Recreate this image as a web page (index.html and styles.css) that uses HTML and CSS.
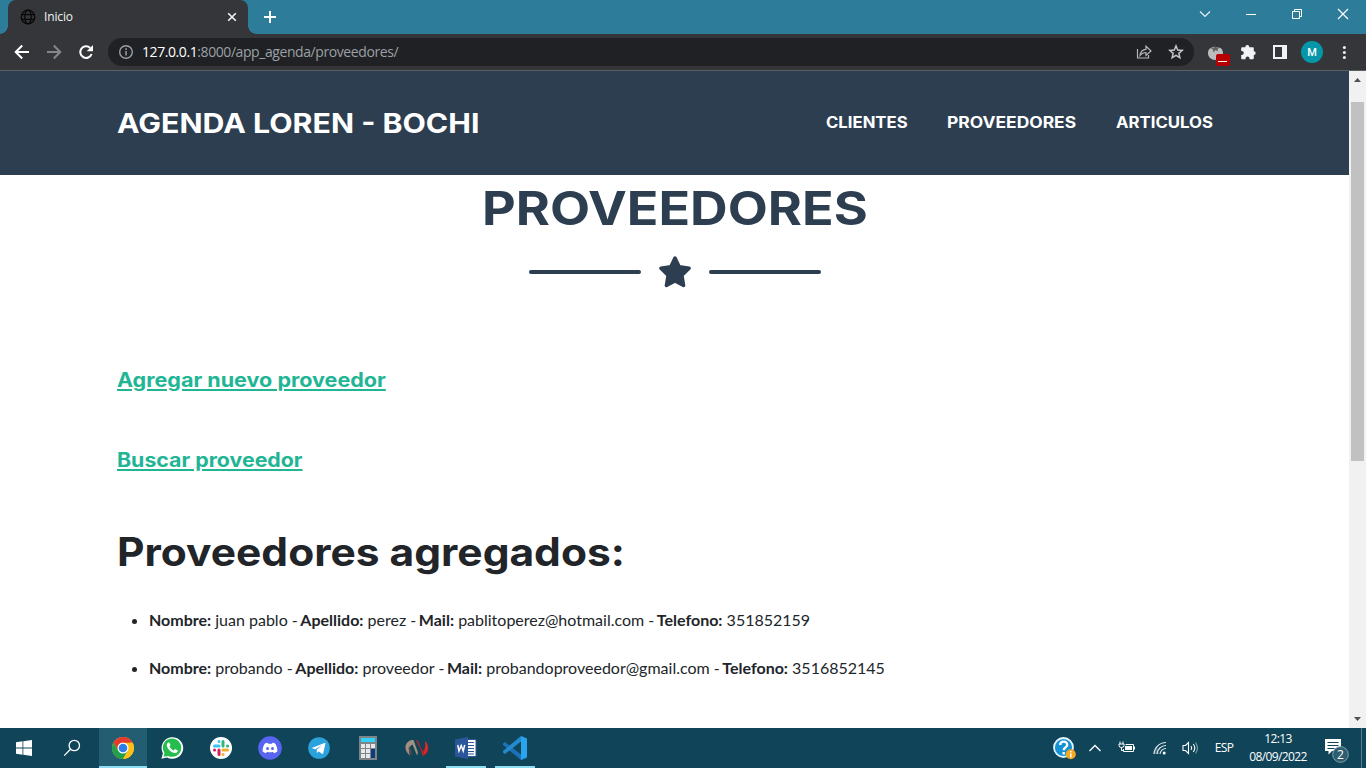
FILE: index.html
```html
<!DOCTYPE html>
<html lang="es">
<head>
<meta charset="utf-8">
<title>Inicio</title>
<link rel="stylesheet" href="styles.css">
</head>
<body>
<div class="screen">
  <div class="tabstrip">
    <div class="tab">
      <svg class="globe" width="16" height="16" viewBox="0 0 16 16" fill="none" stroke="#080809" stroke-width="1.3"><circle cx="8" cy="8" r="6.8"/><ellipse cx="8" cy="8" rx="3.2" ry="6.8"/><path d="M1.5 5.7h13M1.5 10.3h13"/></svg>
      <span class="tab-title">Inicio</span>
      <svg width="10" height="10" viewBox="0 0 10 10" stroke="#f1f3f4" stroke-width="1.6"><path d="M1.2 1.2l7.6 7.6M8.8 1.2L1.2 8.8"/></svg>
    </div>
    <svg class="newtab" width="12" height="12" viewBox="0 0 12 12" stroke="#fff" stroke-width="2"><path d="M6 0v12M0 6h12"/></svg>
    <div class="wincontrols">
      <svg width="46" height="28" fill="none" stroke="#e6f1f5" stroke-width="1.2"><path d="M18 11.5l5 5 5-5"/></svg>
      <svg width="46" height="28" fill="none" stroke="#fff"><path d="M18 14.5h10"/></svg>
      <svg width="46" height="28" fill="none" stroke="#fff"><path d="M18.500 11.500h7v7h-7zM20.500 11.500v-2h7v7h-2"/></svg>
      <svg width="46" height="28" fill="none" stroke="#fff" stroke-width="1.2"><path d="M18 9l10 10M28 9L18 19"/></svg>
    </div>
  </div>

  <div class="toolbar">
    <svg class="tool" width="32" height="32" viewBox="0 0 32 32" fill="none" stroke="#fff" stroke-width="2"><path d="M23 16H10M16.200 9.500L9.700 16l6.500 6.500"/></svg>
    <svg class="tool" width="32" height="32" viewBox="0 0 32 32" fill="none" stroke="#85868a" stroke-width="2"><path d="M9 16h13M15.800 9.500l6.500 6.500-6.500 6.500"/></svg>
    <svg class="tool" width="32" height="32" viewBox="0 0 32 32"><path d="M20.200 12A5.800 5.800 0 1 0 21.600 18" fill="none" stroke="#fff" stroke-width="2"/><path d="M23 9v6.300h-6.300z" fill="#fff"/></svg>
    <div class="omnibox">
      <svg width="16" height="16" viewBox="0 0 16 16"><circle cx="8" cy="8" r="6.300" fill="none" stroke="#9aa0a6" stroke-width="1.400"/><path d="M7.300 7h1.500v4.500H7.300zM7.300 4.300h1.500v1.600H7.300z" fill="#9aa0a6"/></svg>
      <span class="url"><b>127.0.0.1</b>:8000/app_agenda/proveedores/</span>
      <svg class="share" width="16" height="16" viewBox="0 0 16 16" fill="none" stroke="#b3b5b8" stroke-width="1.200"><path d="M1.500 5v9h11v-3"/><path d="M4 11.500C4.500 7.500 7 5.500 10 5.300V2.200L15 7l-5 4.500V8.500c-2.500 0-4.300.8-6 3z"/></svg>
      <svg width="16" height="16" viewBox="0 0 16 16" fill="none" stroke="#c3c5c8" stroke-width="1.500"><path d="M8 1.900l1.750 4.100 4.450.4-3.350 2.950 1 4.350L8 11.400l-3.850 2.300 1-4.350L1.800 6.400 6.250 6z"/></svg>
    </div>
    <div class="extensions">
      <svg width="32" height="32" viewBox="0 0 32 32"><path d="M15.500 11.500c4.500-1 7.500 1.500 7.500 5.500s-3 7-7.500 7S8 21 8 17s3-6.500 7.500-5.500z" fill="#bcbcbc"/><path d="M10.500 12l3.500.3.500-3.800 1.200 3.300 4.300-1-2.500 2.700.5 2-2.500-1.500-2 2.500-.5-2.800z" fill="#5d5e60"/><rect x="16" y="18" width="14" height="12" rx="2" fill="#b80000"/><path d="M18 25.500h9" stroke="#fff"/></svg>
      <svg width="32" height="32" viewBox="0 0 32 32"><path d="M13.300 11.300V11a2 2 0 0 1 4 0v.3h3.200c.8 0 1.300.5 1.300 1.300v2.600a1.900 1.900 0 0 1 0 3.800v2.900c0 .8-.5 1.300-1.300 1.300h-3v-.6a2 2 0 0 0-4 0v.6h-3c-.8 0-1.300-.5-1.300-1.300v-2.800h.6a2 2 0 0 0 0-4h-.6v-2.500c0-.8.5-1.300 1.300-1.300z" fill="#f1f3f4"/></svg>
      <svg width="32" height="32" viewBox="0 0 32 32"><path fill-rule="evenodd" d="M9 9h14v14H9zM11 11h7v10h-7z" fill="#f1f3f4"/></svg>
      <span class="avatar">M</span>
      <svg width="32" height="32" viewBox="0 0 32 32" fill="#f1f3f4"><circle cx="16.400" cy="11.500" r="1.500"/><circle cx="16.400" cy="16.500" r="1.500"/><circle cx="16.400" cy="21.500" r="1.500"/></svg>
    </div>
  </div>

  <div class="viewport">
    <div class="page">
      <nav class="nav">
        <a class="brand"><span>AGENDA LOREN - BOCHI</span></a>
        <a class="link clientes"><span>CLIENTES</span></a>
        <a class="link proveedores"><span>PROVEEDORES</span></a>
        <a class="link articulos"><span>ARTICULOS</span></a>
      </nav>
      <main class="content">
        <h2 class="title"><span>PROVEEDORES</span></h2>
        <div class="divider">
          <i class="bar"></i>
          <svg width="34" height="34" viewBox="0 0 34 34"><path d="M17 3l4.200 8.800 9.900 1.400-7.200 7 1.700 10.300L17 26l-8.600 4.500 1.700-10.300-7.200-7 9.900-1.400z" fill="#2c3e50" stroke="#2c3e50" stroke-width="3.500" stroke-linejoin="round"/></svg>
          <i class="bar"></i>
        </div>
        <a class="action add"><span>Agregar nuevo proveedor</span></a>
        <a class="action search"><span>Buscar proveedor</span></a>
        <h1 class="subtitle"><span>Proveedores agregados:</span></h1>
        <ul class="list">
          <li><b>Nombre:</b> juan pablo - <b>Apellido:</b> perez - <b>Mail:</b> pablitoperez@hotmail.com - <b>Telefono:</b> 351852159</li>
          <li><b>Nombre:</b> probando - <b>Apellido:</b> proveedor - <b>Mail:</b> probandoproveedor@gmail.com - <b>Telefono:</b> 3516852145</li>
        </ul>
      </main>
    </div>
    <div class="scrollbar">
      <svg width="17" height="17" fill="#505050"><path d="M5 11h7L8.500 7z"/></svg>
      <div class="thumb"></div>
      <svg class="down" width="17" height="17" fill="#505050"><path d="M5 6h7l-3.500 4z"/></svg>
    </div>
  </div>

  <div class="taskbar">
    <div class="cell"><svg width="16" height="16" viewBox="0 0 16 16" fill="#fff"><path d="M0 2.200l6.500-.9v6.300H0zM7.300 1.200L16 0v7.600H7.300zM0 8.400h6.500v6.300L0 13.800zM7.300 8.400H16V16l-8.700-1.200z"/></svg></div>
    <div class="cell"><svg width="18" height="18" viewBox="0 0 18 18" fill="none" stroke="#fff" stroke-width="1.300"><circle cx="11.300" cy="6.500" r="5.200"/><path d="M7.500 10.300L1.200 16.600"/></svg></div>
    <div class="apps">
      <div class="cell active"><svg width="24" height="24" viewBox="0 0 24 24"><circle cx="12" cy="12" r="11" fill="#fbc116"/><path d="M2.470 6.500A11 11 0 0 1 21.530 6.500L12 7 7.240 14.750z" fill="#e33b2e"/><path d="M2.470 6.500A11 11 0 0 0 12 23l4.760-8.250H7.240z" fill="#229f4d"/><path d="M12 7h9.800A11 11 0 0 1 12 23l4.760-8.250z" fill="#fbc116"/><circle cx="12" cy="12" r="5.500" fill="#fff"/><circle cx="12" cy="12" r="4.300" fill="#2b7de9"/></svg></div>
      <div class="cell"><svg width="24" height="24" viewBox="0 0 24 24"><path d="M1.400 22.800l1.500-5.600A10.800 10.800 0 1 1 7 21.400z" fill="#fff"/><path d="M3.500 20.700l1-3.800A9.200 9.200 0 1 1 8 19.900z" fill="#25bd4b"/><path d="M8.300 6.500c-.9.400-1.600 1.300-1.500 2.700.2 3.500 5 8 8.600 7.700 1.400-.1 2.400-1 2.400-2.500l-2.800-1.500-1.300 1.500c-2-.8-3.300-2-4.200-3.900l1-1.300-1.100-2.700z" fill="#fff"/></svg></div>
      <div class="cell"><svg width="24" height="24" viewBox="0 0 24 24"><circle cx="12" cy="12" r="11" fill="#fff"/><g stroke-width="3" stroke-linecap="round"><path d="M10 5.500v.1M5.500 10H10" stroke="#36c5f0"/><path d="M14 5.500V10M18.500 10h.1" stroke="#2eb67d"/><path d="M14 14h4.500M14 18.500v.1" stroke="#ecb22e"/><path d="M10 14v4.500M5.500 14h.1" stroke="#e01e5a"/></g></svg></div>
      <div class="cell"><svg width="24" height="24" viewBox="0 0 24 24"><circle cx="12" cy="12" r="11.800" fill="#5865f2"/><path d="M9.500 6.800c-1.200.1-2.200.5-3 1.100C5 10.500 4.500 13 4.700 15.600c1 .8 2 1.300 3.300 1.600l.9-1.400c2 .7 4.200.7 6.200 0l.9 1.400c1.300-.3 2.300-.8 3.300-1.600.2-2.600-.3-5.100-1.800-7.700-.8-.6-1.800-1-3-1.100l-.5 1c-1.300-.2-2.700-.2-4 0z" fill="#fff"/><circle cx="9.500" cy="12.600" r="1.500" fill="#5865f2"/><circle cx="14.500" cy="12.600" r="1.500" fill="#5865f2"/></svg></div>
      <div class="cell"><svg width="24" height="24" viewBox="0 0 24 24"><circle cx="12" cy="12" r="10.800" fill="#2ca2dd"/><path d="M4.800 12l12.700-5c.6-.2 1 .1.900.8l-2.200 9.500c-.2.700-.6.800-1.200.5L11.700 15.400l-1.800 1.700-.3-3.300 5.300-4.600-6.600 4.100-3.300-1c-.6-.1-.5-.2-.2-.3z" fill="#fff"/></svg></div>
      <div class="cell"><svg width="24" height="24" viewBox="0 0 24 24"><path d="M3 0h18v24H3z" fill="#7d858b"/><path d="M5 2h14v4H5z" fill="#32d1f5"/><path d="M5 8h4v4H5zM10 8h4v4h-4zM15 8h4v4h-4zM5 13h4v4H5zM10 13h4v4h-4zM5 18h4v4H5zM10 18h4v4h-4z" fill="#e8e8e8"/><path d="M15 13h4v9h-4z" fill="#0e3b7b"/></svg></div>
      <div class="cell"><svg width="26" height="24" viewBox="0 0 26 24"><path d="M7.500 4C0 6-.5 15 6 19.500 4 15 5 10 8.500 8.500L13 19.500l1-3L9.500 4z" fill="#a18f82"/><path d="M5 10c-1 3 0 7 3 10l-1-6z" fill="#5d4a42"/><path d="M11.500 4l4.500 8 2.500 8c7-2 8-11 2.500-15 1 5 0 8-2.500 10L14 5z" fill="#b02329"/><path d="M21 5c4 4 3 11-2 14 3-5 3-9 2-14z" fill="#d63235"/></svg></div>
      <div class="cell open"><svg width="24" height="24" viewBox="0 0 24 24"><path d="M12 3.500h10v17H12z" fill="#fff" stroke="#315596" stroke-width="1"/><path d="M14 6.500h6M14 9.500h6M14 12.500h6M14 15.500h6M14 18h6" stroke="#315596" stroke-width="1.200"/><path d="M1 3.500L14 1v22L1 20.500z" fill="#2b579a"/><path d="M3.700 9l1.300 6 2.200-5.500 2 5.500L10.700 9" fill="none" stroke="#fff" stroke-width="1.500"/></svg></div>
      <div class="cell open"><svg width="24" height="24" viewBox="0 0 24 24"><path d="M0 7.500L2 6l16 12.500V24L0 9z" fill="#1b72b8"/><path d="M0 16.500L2 18 18 5.500V0L0 15z" fill="#2489ce"/><path d="M18 0l6 2.500v19L18 24z" fill="#2aa4ee"/></svg></div>
    </div>
    <div class="tray">
      <div class="help"><svg width="24" height="24" viewBox="0 0 24 24"><circle cx="11.500" cy="11.500" r="9.500" fill="#1591d4" stroke="#e3f5fb" stroke-width="1.800"/><path d="M8.200 9c0-4.500 7-4.300 7-.3 0 2.700-3.500 2.600-3.500 5.600M11.700 16v2.400" fill="none" stroke="#fff" stroke-width="2.400"/><circle cx="18.800" cy="18.300" r="5" fill="#f3aa20"/><path d="M18.800 15v1.500M18.800 17.500v4" stroke="#fff" stroke-width="1.500"/></svg></div>
      <div class="chev"><svg width="14" height="10" fill="none" stroke="#fff" stroke-width="1.300"><path d="M1.500 8L7 2.500 12.500 8"/></svg></div>
      <div class="batt"><svg width="18" height="16" viewBox="0 0 18 16" fill="none" stroke="#fff"><path d="M7.500 4.500h8v7h-10V9M16.500 6.500v3"/><path d="M1 4h5v1.500a2.500 2 0 0 1-5 0zM2 1.500V4M5 1.500V4M3.500 7.500v3h2"/><path d="M7 6h7v4H7z" fill="#fff" stroke="none"/></svg></div>
      <div class="wifi"><svg width="14" height="14" viewBox="0 0 14 14" fill="none" stroke="#e1e9ed" stroke-width="1.200"><path d="M1 13A12 12 0 0 1 13 1.500M4 13a9 9 0 0 1 9-8.500M7 13a6 6 0 0 1 6-5.500"/><path d="M1 13A12 12 0 0 1 4 5l2 8z" fill="#e1e9ed" opacity=".25" stroke="none"/><circle cx="11.200" cy="12" r="1.500" fill="#fff" stroke="none"/></svg></div>
      <div class="vol"><svg width="18" height="14" viewBox="0 0 18 14" fill="none" stroke="#fff" stroke-width="1.100"><path d="M2 4.500h2.500l3-3v11l-3-3H2z"/><path d="M10 5q1.500 2 0 4M12.300 3q3 4 0 8"/><path d="M14.500 1.500q4 5.500 0 11" stroke="#7d9daa"/></svg></div>
      <div class="lang">ESP</div>
      <div class="clock"><span>12:13</span><span>08/09/2022</span></div>
      <div class="notif"><svg width="26" height="26" viewBox="0 0 26 26"><path d="M2 2h16v12H9l-3.500 3.500V14H2z" fill="#fff"/><path d="M4.500 5.500h11M4.500 8.500h11M4.500 11.500h7" stroke="#104458"/><circle cx="17.500" cy="17.500" r="7.800" fill="#2f5d70" stroke="#83a1ad"/><text x="17.500" y="22" text-anchor="middle" class="count">2</text></svg></div>
      <i class="edge"></i>
    </div>
  </div>
</div>
</body>
</html>
```

FILE: styles.css
```css
* { box-sizing: border-box; }
body { margin: 0; overflow: hidden; }
svg { display: block; flex: none; }
.screen { width: 1366px; height: 768px; display: flex; flex-direction: column; overflow: hidden; background: #fff; }

.tabstrip { height: 34px; flex: none; display: flex; background: #2d7c9a; padding-left: 8px; }
.tab { width: 240px; height: 34px; background: #35363a; border-radius: 8px 8px 0 0; display: flex; align-items: center; padding: 0 11px 0 12px; position: relative; }
.tab::before, .tab::after { content: ""; position: absolute; bottom: 0; width: 8px; height: 8px; }
.tab::before { left: -8px; background: radial-gradient(circle at 0 0, transparent 7.5px, #35363a 8px); }
.tab::after { right: -8px; background: radial-gradient(circle at 100% 0, transparent 7.5px, #35363a 8px); }
.tab-title { flex: 1; margin: -2px 0 0 8px; font: 12px "Open Sans", "Noto Sans", sans-serif; letter-spacing: -0.15px; color: #f1f3f4; }
.newtab { margin: 11px 0 0 16px; }
.wincontrols { display: flex; margin-left: auto; }

.toolbar { height: 37px; flex: none; display: flex; align-items: center; background: #35363a; border-bottom: 1px solid #5b6065; padding-left: 6px; }
.tool { margin: 0; }
.omnibox { width: 1086px; height: 28px; margin-left: 6px; border-radius: 14px; background: #202124; display: flex; align-items: center; padding: 0 10px; gap: 16px; }
.url { flex: 1; margin: -1px 0 0 -8px; font: 14px "Open Sans", "Noto Sans", sans-serif; letter-spacing: -0.42px; color: #9aa0a6; white-space: nowrap; }
.url b { font-weight: 400; color: #fff; }
.extensions { display: flex; align-items: center; margin-left: 6px; }
.avatar { width: 22px; height: 22px; margin: 0 5px; border-radius: 50%; background: #0497a7; color: #fff; font: 500 11px/23px Roboto, sans-serif; text-align: center; }

.viewport { height: 657px; flex: none; display: flex; }
.page { width: 1349px; background: #fff; }
.nav { height: 104px; background: #2c3e50; display: flex; align-items: center; padding: 0 136px 0 117px; color: #fff; font-family: Inter, sans-serif; font-weight: 700; gap: 40px; white-space: nowrap; }
.nav span, .title span, .action span, .subtitle span { display: inline-block; transform-origin: 0 50%; white-space: nowrap; }
.brand { width: 362px; margin-right: auto; font-size: 27px; }
.brand span { transform: scaleX(1.122); }
.link { font-size: 15.4px; line-height: 20px; }
.clientes { width: 81px; }
.clientes span { transform: scaleX(1.085); }
.proveedores { width: 129px; }
.proveedores span { transform: scaleX(1.132); }
.articulos { width: 97px; }
.articulos span { transform: scaleX(1.088); }

.content { padding: 4px 117px 0; display: flex; flex-direction: column; align-items: flex-start; }
.title { width: 384px; margin: 0 0 0 365px; font: 700 46px/58px Inter, sans-serif; color: #2c3e50; }
.title span { transform: scaleX(1.132); }
.divider { display: flex; align-items: center; gap: 17px; margin: 18px 0 0 412px; }
.bar { width: 112px; height: 4px; border-radius: 4px; background: #2c3e50; }
.action { font: 700 19.4px/24px Inter, sans-serif; color: #1fb595; }
.action span { text-decoration: underline; text-decoration-thickness: 2px; text-underline-offset: 2px; }
.add { margin-top: 79px; }
.add span { transform: scaleX(1.111); }
.search { margin-top: 56px; }
.search span { transform: scaleX(1.1); }
.subtitle { margin: 56px 0 0; font: 700 39px/48px Inter, sans-serif; color: #212529; }
.subtitle span { transform: scaleX(1.089); }
.list { margin: 32px 0 0; padding-left: 32px; font: 16px/24px Lato, sans-serif; color: #212529; }
.list li { margin-bottom: 24px; white-space: nowrap; }
.list b + b { margin-left: -1.5px; }

.scrollbar { width: 17px; background: #f1f1f1; display: flex; flex-direction: column; align-items: center; }
.thumb { width: 13px; height: 359px; margin-top: 14px; background: #c1c1c1; }
.down { margin-top: auto; }

.taskbar { height: 40px; flex: none; display: flex; background: #104458; color: #fff; font-family: "Open Sans", "Noto Sans", sans-serif; }
.cell { width: 48px; height: 40px; display: flex; align-items: center; justify-content: center; }
.apps { display: flex; gap: 1px; margin-left: 3px; }
.active { background: #235d71; box-shadow: inset 0 -2px #8edcf2; }
.open { background: linear-gradient(#8edcf2, #8edcf2) center bottom / 40px 2px no-repeat; }
.tray { display: flex; margin-left: auto; }
.tray > div { height: 40px; display: flex; align-items: center; justify-content: center; }
.help { width: 32px; }
.chev { width: 30px; }
.batt { width: 34px; }
.wifi { width: 32px; }
.vol { width: 28px; }
.lang { width: 40px; font-size: 12px; letter-spacing: -0.6px; padding-bottom: 1px; }
.tray .clock { width: 68px; flex-direction: column; font-size: 12px; line-height: 18px; letter-spacing: -0.6px; padding-bottom: 1px; }
.notif { width: 49px; padding: 4px 2px 0 0; }
.count { font: 12px "Open Sans", sans-serif; fill: #fff; }
.edge { width: 5px; border-left: 1px solid #58808f; }
```
